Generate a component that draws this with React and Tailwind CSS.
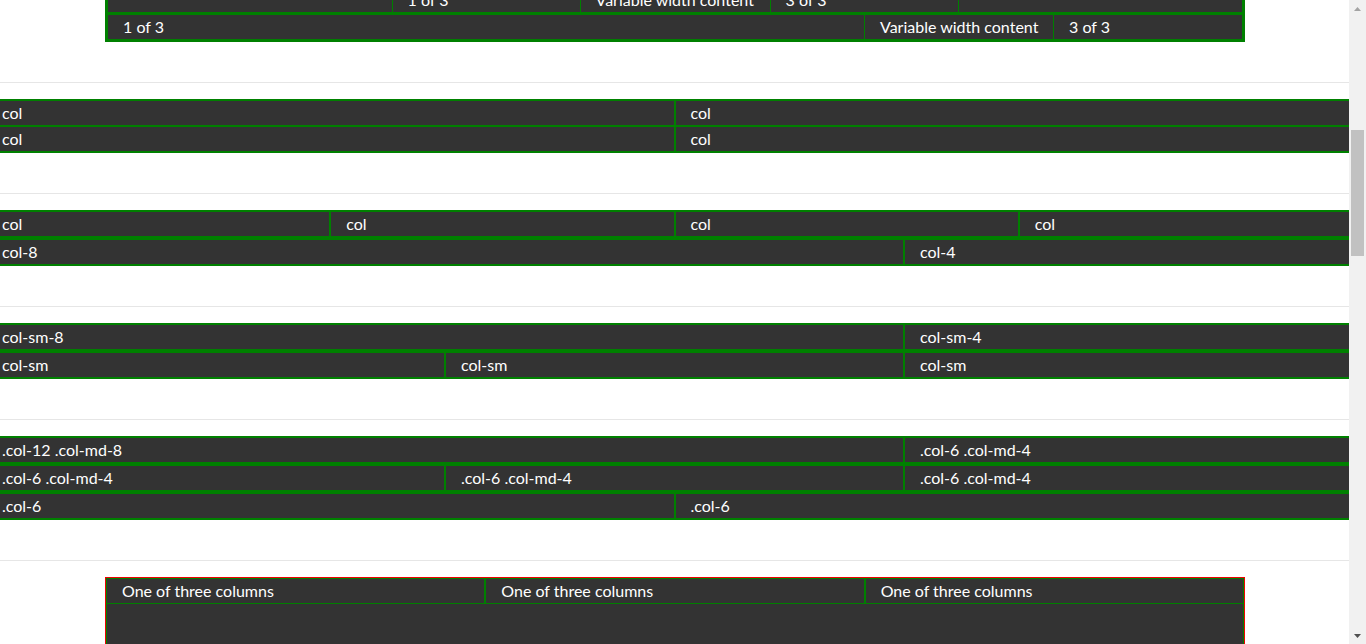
import React from 'react';

const green = 'border-[#008000]';
const font = { fontFamily: 'Lato, "Open Sans", sans-serif' };

// full-bleed row, bootstrap-ish: row pulls out 15px each side
function Row({ cols, wrapAt }) {
  return (
    <div className={`-mx-[15px] flex flex-wrap border ${green}`}>
      {cols.map((c, i) => (
        <React.Fragment key={i}>
          <div
            className={`border ${green} bg-[#333333] px-[15px] leading-6 whitespace-nowrap text-white`}
            style={{ width: c.w }}
          >
            {c.label}
          </div>
          {wrapAt === i + 1 && <div className="basis-full" />}
        </React.Fragment>
      ))}
    </div>
  );
}

// 40px above, 16px below, like the section margin + hr margin
function Divider() {
  return <hr className="mt-10 mb-4 border-t border-[#e6e6e6]" />;
}

function Scrollbar() {
  return (
    <div className="flex w-[17px] shrink-0 flex-col bg-[#f1f1f1]">
      <div className="flex h-[17px] items-center justify-center">
        <svg width="7" height="4" viewBox="0 0 7 4"><path d="M0 4 L3.5 0 L7 4 Z" fill="#a3a3a3" /></svg>
      </div>
      <div className="mx-[2px] mt-[113px] h-[126px] bg-[#c1c1c1]" />
      <div className="flex-1" />
      <div className="flex h-[17px] items-center justify-center">
        <svg width="7" height="4" viewBox="0 0 7 4"><path d="M0 0 L7 0 L3.5 4 Z" fill="#505050" /></svg>
      </div>
    </div>
  );
}

export default function App() {
  const half = '50%';
  const quarter = '25%';
  const third = '33.3333%';
  const eight = '66.6667%';
  const four = '33.3333%';

  return (
    <div className="flex h-[644px] overflow-hidden bg-white text-base" style={font}>
      <div className="min-w-0 flex-1 overflow-hidden">
        <div className="-mt-[15px]">
          {/* fixed container, variable width content */}
          <div className={`ml-[105px] w-[1140px] border-[3px] ${green} bg-[#333333] text-white leading-6 whitespace-nowrap`}>
            <div className={`flex border-b-[3px] ${green}`}>
              <div className="flex-1" />
              <div className={`w-[188px] border-l ${green} px-[15px]`}>1 of 3</div>
              <div className={`w-[190px] border-l ${green} px-[15px]`}>Variable width content</div>
              <div className={`w-[188px] border-l ${green} px-[15px]`}>3 of 3</div>
              <div className={`flex-1 border-l ${green}`} />
            </div>
            <div className="flex">
              <div className="flex-1 px-[15px]">1 of 3</div>
              <div className={`w-[189px] border-l ${green} px-[15px]`}>Variable width content</div>
              <div className={`w-[189px] border-l ${green} px-[15px]`}>3 of 3</div>
            </div>
          </div>
          <Divider />

          <Row
            wrapAt={2}
            cols={[
              { label: 'col', w: half },
              { label: 'col', w: half },
              { label: 'col', w: half },
              { label: 'col', w: half },
            ]}
          />
          <Divider />

          <Row cols={[
            { label: 'col', w: quarter },
            { label: 'col', w: quarter },
            { label: 'col', w: quarter },
            { label: 'col', w: quarter },
          ]} />
          <Row cols={[
            { label: 'col-8', w: eight },
            { label: 'col-4', w: four },
          ]} />
          <Divider />

          <Row cols={[
            { label: 'col-sm-8', w: eight },
            { label: 'col-sm-4', w: four },
          ]} />
          <Row cols={[
            { label: 'col-sm', w: third },
            { label: 'col-sm', w: third },
            { label: 'col-sm', w: third },
          ]} />
          <Divider />

          <Row cols={[
            { label: '.col-12 .col-md-8', w: eight },
            { label: '.col-6 .col-md-4', w: four },
          ]} />
          <Row cols={[
            { label: '.col-6 .col-md-4', w: third },
            { label: '.col-6 .col-md-4', w: third },
            { label: '.col-6 .col-md-4', w: third },
          ]} />
          <Row cols={[
            { label: '.col-6', w: half },
            { label: '.col-6', w: half },
          ]} />
          <Divider />

          {/* red container */}
          <div className="ml-[105px] w-[1140px] border border-[#ee0000]">
            <div className={`h-[200px] border ${green} bg-[#333333] text-white leading-6 whitespace-nowrap`}>
              <div className="flex">
                <div className={`flex-1 border-b border-r ${green} px-[15px]`}>One of three columns</div>
                <div className={`flex-1 border-b border-x ${green} px-[15px]`}>One of three columns</div>
                <div className={`flex-1 border-b border-l ${green} px-[15px]`}>One of three columns</div>
              </div>
            </div>
          </div>
        </div>
      </div>
      <Scrollbar />
    </div>
  );
}
